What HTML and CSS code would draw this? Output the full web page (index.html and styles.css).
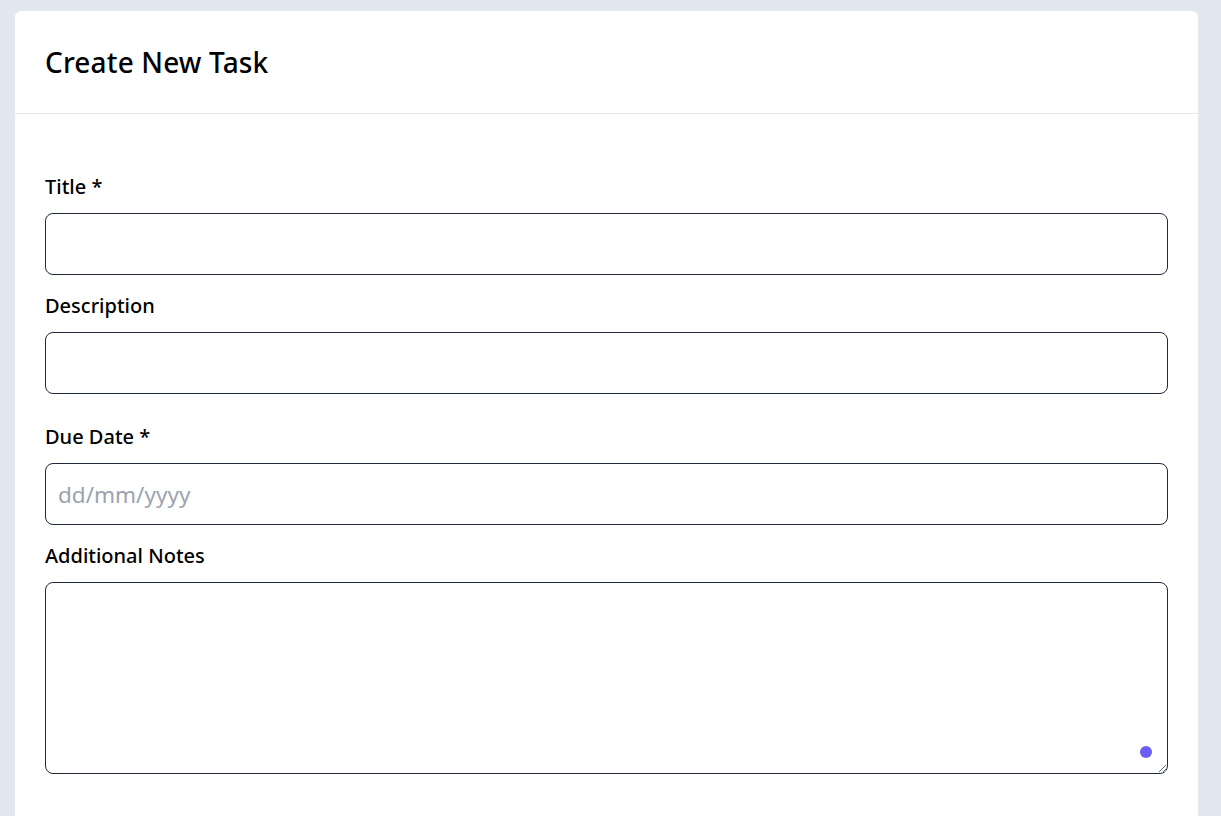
FILE: index.html
```html
<!DOCTYPE html>
<html lang="en">
<head>
<meta charset="utf-8">
<title>Create New Task</title>
<link rel="stylesheet" href="styles.css">
</head>
<body>
<div class="card">
  <div class="card-header">
    <h1 class="card-title">Create New Task</h1>
  </div>
  <form class="card-body">
    <div class="field">
      <label class="label" for="title">Title *</label>
      <input class="input" id="title" type="text">
    </div>
    <div class="field field-wide">
      <label class="label" for="desc">Description</label>
      <input class="input" id="desc" type="text">
    </div>
    <div class="field">
      <label class="label" for="due">Due Date *</label>
      <input class="input" id="due" type="text" placeholder="dd/mm/yyyy">
    </div>
    <div class="field">
      <label class="label" for="notes">Additional Notes</label>
      <div class="textarea-wrap">
        <textarea class="textarea" id="notes"></textarea>
        <span class="dot"></span>
      </div>
    </div>
  </form>
</div>
</body>
</html>
```

FILE: styles.css
```css
html, body {
  margin: 0;
  background: #e2e8f0;
  height: 816px;
  overflow: hidden;
}
body {
  padding: 11px 23px 0 15px;
  font-family: "Noto Sans", "Open Sans", sans-serif;
  color: #111;
}
.card {
  background: #fff;
  border-radius: 6px;
  min-height: 900px;
}
.card-header {
  height: 103px;
  box-sizing: border-box;
  border-bottom: 1px solid #e5e7eb;
  padding: 0 30px;
  display: flex;
  align-items: center;
}
.card-title {
  margin: 0;
  font-size: 28px;
  font-weight: 500;
  color: #000;
  letter-spacing: 0.15px;
}
.card-body {
  padding: 59px 30px 0;
  display: flex;
  flex-direction: column;
}
.field {
  display: flex;
  flex-direction: column;
  margin-bottom: 17px;
}
.field-wide {
  margin-bottom: 29px;
}
.label {
  font-size: 20px;
  line-height: 27px;
  height: 27px;
  font-weight: 500;
  color: #000;
  margin-bottom: 13px;
}
.input {
  height: 62px;
  flex: none;
  box-sizing: border-box;
  border: 1px solid #1f2937;
  border-radius: 8px;
  padding: 0 12px;
  font: inherit;
  font-size: 22.5px;
  color: #111;
  outline: none;
}
.input::placeholder {
  color: #9ca3af;
}
.textarea-wrap {
  position: relative;
  display: flex;
}
.textarea {
  flex: 1;
  height: 192px;
  box-sizing: border-box;
  border: 1px solid #1f2937;
  border-radius: 8px;
  padding: 12px;
  font: inherit;
  font-size: 22px;
  outline: none;
  resize: vertical;
}
.dot {
  position: absolute;
  right: 16px;
  bottom: 16px;
  width: 12px;
  height: 12px;
  border-radius: 50%;
  background: #6c5cf7;
}
```
